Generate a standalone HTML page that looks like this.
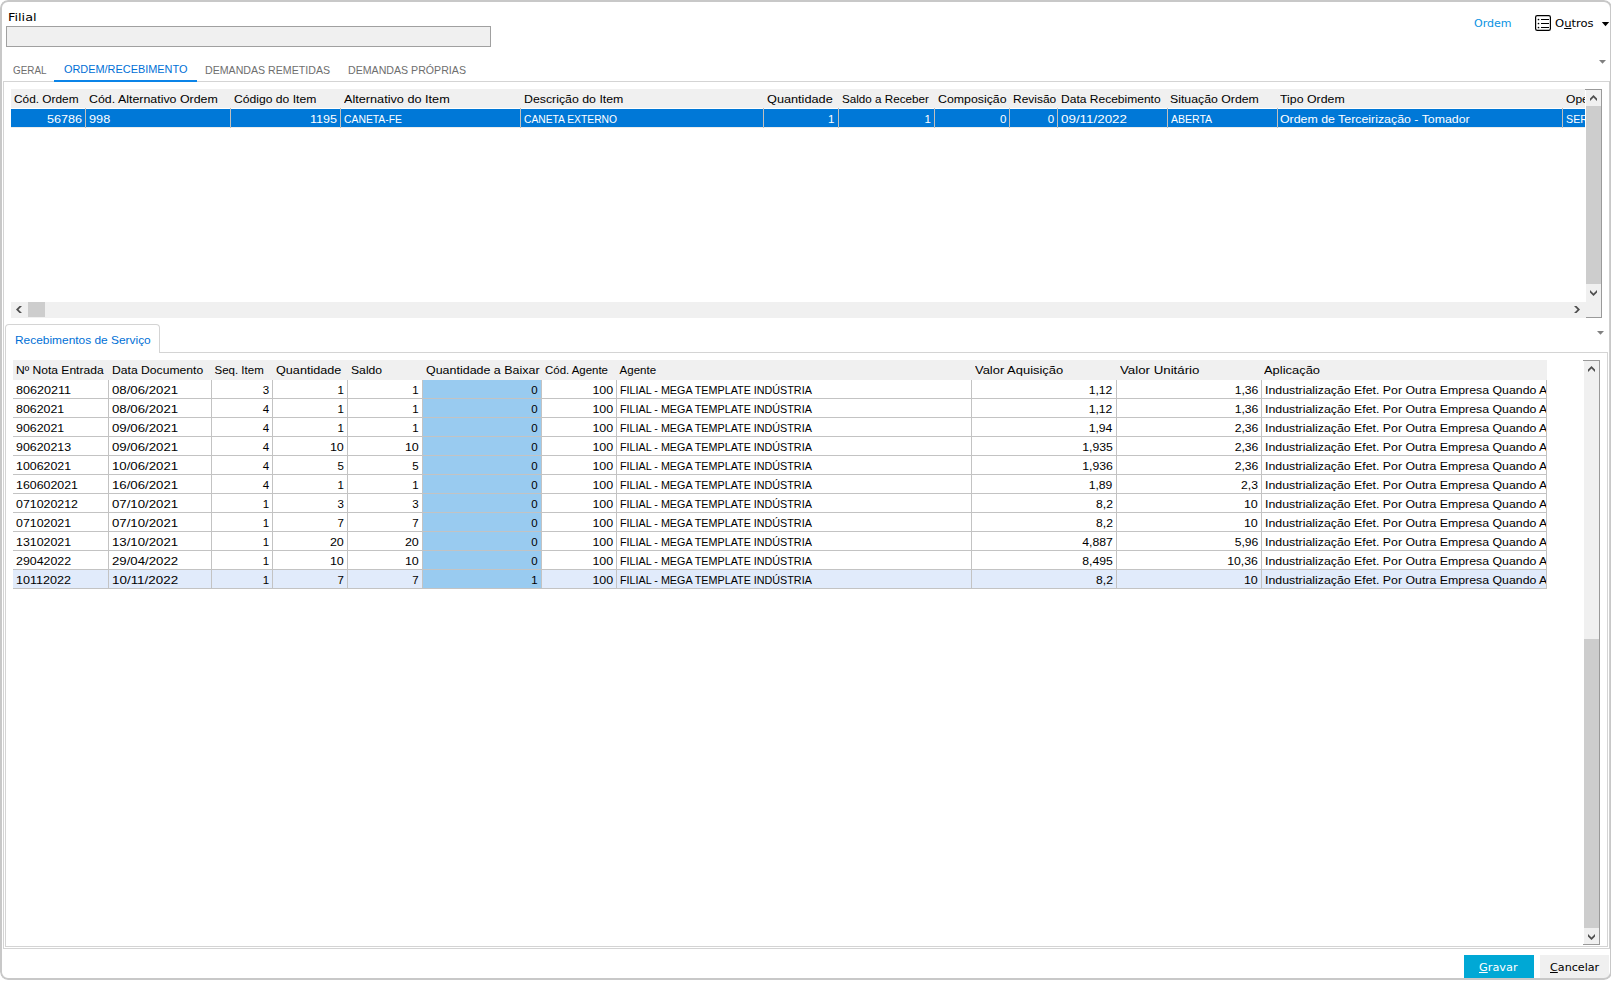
<!DOCTYPE html>
<html lang="pt-BR"><head><meta charset="utf-8"><title>Ordem/Recebimento</title>
<style>
html,body{margin:0;padding:0;background:#fff;}
body{width:1611px;height:984px;position:relative;overflow:hidden;font-family:'Liberation Sans', sans-serif;}
#win{position:absolute;left:0;top:0;width:1612px;height:980px;border-radius:8px;overflow:hidden;background:#fff;}
#frame{position:absolute;left:0;top:0;width:1612px;height:980px;box-sizing:border-box;border:2px solid #c8c8c8;border-radius:8px;pointer-events:none;}
.b{position:absolute;}
.t{position:absolute;white-space:pre;line-height:16px;height:16px;display:block;}
.t.c{overflow:hidden;}
.t.c span{display:block;width:max-content;white-space:pre;line-height:16px;}
u{text-decoration:underline;text-underline-offset:1px;}
</style></head><body>
<div id="win">
<div class="b" style="left:6px;top:26px;width:485px;height:21px;background:#f0f0f0;border:1px solid #a0a0a0;box-sizing:border-box;"></div>
<div class="b" style="left:3px;top:81px;width:1607px;height:1px;background:#d4d4d4;"></div>
<div class="b" style="left:3px;top:81px;width:1px;height:868px;background:#d4d4d4;"></div>
<div class="b" style="left:1609px;top:81px;width:1px;height:868px;background:#cfcfcf;"></div>
<div class="b" style="left:3px;top:948px;width:1607px;height:1px;background:#d4d4d4;"></div>
<div class="b" style="left:54px;top:80px;width:143px;height:2px;background:#0b84e8;"></div>
<div class="b" style="left:11px;top:89px;width:1574px;height:19px;background:#f0f0f0;"></div>
<div class="b" style="left:11px;top:127px;width:1574px;height:1px;background:#ececec;"></div>
<div class="b" style="left:11px;top:109px;width:1574px;height:18px;background:#0078d7;"></div>
<div class="b" style="left:85px;top:108px;width:1px;height:20px;background:#c2bfbc;"></div>
<div class="b" style="left:230px;top:108px;width:1px;height:20px;background:#c2bfbc;"></div>
<div class="b" style="left:340px;top:108px;width:1px;height:20px;background:#c2bfbc;"></div>
<div class="b" style="left:520px;top:108px;width:1px;height:20px;background:#c2bfbc;"></div>
<div class="b" style="left:763px;top:108px;width:1px;height:20px;background:#c2bfbc;"></div>
<div class="b" style="left:838px;top:108px;width:1px;height:20px;background:#c2bfbc;"></div>
<div class="b" style="left:934px;top:108px;width:1px;height:20px;background:#c2bfbc;"></div>
<div class="b" style="left:1009px;top:108px;width:1px;height:20px;background:#c2bfbc;"></div>
<div class="b" style="left:1057px;top:108px;width:1px;height:20px;background:#c2bfbc;"></div>
<div class="b" style="left:1167px;top:108px;width:1px;height:20px;background:#c2bfbc;"></div>
<div class="b" style="left:1277px;top:108px;width:1px;height:20px;background:#c2bfbc;"></div>
<div class="b" style="left:1562px;top:108px;width:1px;height:20px;background:#c2bfbc;"></div>
<div class="b" style="left:1586px;top:89px;width:16px;height:229px;background:#f0f0f0;"></div>
<div class="b" style="left:1585px;top:89px;width:17px;height:1px;background:#9a9a9a;"></div>
<div class="b" style="left:1601px;top:89px;width:1px;height:229px;background:#9a9a9a;"></div>
<div class="b" style="left:1585px;top:317px;width:17px;height:1px;background:#9a9a9a;"></div>
<div class="b" style="left:1586px;top:106px;width:15px;height:178px;background:#cdcdcd;"></div>
<div class="b" style="left:11px;top:302px;width:1575px;height:16px;background:#f0f0f0;"></div>
<div class="b" style="left:28px;top:302px;width:17px;height:15px;background:#cdcdcd;"></div>
<div class="b" style="left:5px;top:324px;width:155px;height:29px;background:#fff;border:1px solid #d4d4d4;border-bottom:none;border-radius:4px 4px 0 0;box-sizing:border-box;"></div>
<div class="b" style="left:159px;top:352px;width:1449px;height:1px;background:#d4d4d4;"></div>
<div class="b" style="left:5px;top:352px;width:1px;height:595px;background:#d4d4d4;"></div>
<div class="b" style="left:1607px;top:352px;width:1px;height:595px;background:#d4d4d4;"></div>
<div class="b" style="left:5px;top:946px;width:1603px;height:1px;background:#d4d4d4;"></div>
<div class="b" style="left:13px;top:360px;width:1534px;height:20px;background:#f0f0f0;"></div>
<div class="b" style="left:13px;top:570px;width:1534px;height:18px;background:#e1ebfb;"></div>
<div class="b" style="left:423px;top:380px;width:118px;height:209px;background:#99cbf0;"></div>
<div class="b" style="left:13px;top:398px;width:1534px;height:1px;background:#c3c3c3;"></div>
<div class="b" style="left:13px;top:417px;width:1534px;height:1px;background:#c3c3c3;"></div>
<div class="b" style="left:13px;top:436px;width:1534px;height:1px;background:#c3c3c3;"></div>
<div class="b" style="left:13px;top:455px;width:1534px;height:1px;background:#c3c3c3;"></div>
<div class="b" style="left:13px;top:474px;width:1534px;height:1px;background:#c3c3c3;"></div>
<div class="b" style="left:13px;top:493px;width:1534px;height:1px;background:#c3c3c3;"></div>
<div class="b" style="left:13px;top:512px;width:1534px;height:1px;background:#c3c3c3;"></div>
<div class="b" style="left:13px;top:531px;width:1534px;height:1px;background:#c3c3c3;"></div>
<div class="b" style="left:13px;top:550px;width:1534px;height:1px;background:#c3c3c3;"></div>
<div class="b" style="left:13px;top:569px;width:1534px;height:1px;background:#c3c3c3;"></div>
<div class="b" style="left:13px;top:588px;width:1534px;height:1px;background:#c3c3c3;"></div>
<div class="b" style="left:108px;top:380px;width:1px;height:209px;background:#c3c3c3;"></div>
<div class="b" style="left:211px;top:380px;width:1px;height:209px;background:#c3c3c3;"></div>
<div class="b" style="left:272px;top:380px;width:1px;height:209px;background:#c3c3c3;"></div>
<div class="b" style="left:347px;top:380px;width:1px;height:209px;background:#c3c3c3;"></div>
<div class="b" style="left:422px;top:380px;width:1px;height:209px;background:#c3c3c3;"></div>
<div class="b" style="left:541px;top:380px;width:1px;height:209px;background:#c3c3c3;"></div>
<div class="b" style="left:616px;top:380px;width:1px;height:209px;background:#c3c3c3;"></div>
<div class="b" style="left:971px;top:380px;width:1px;height:209px;background:#c3c3c3;"></div>
<div class="b" style="left:1116px;top:380px;width:1px;height:209px;background:#c3c3c3;"></div>
<div class="b" style="left:1261px;top:380px;width:1px;height:209px;background:#c3c3c3;"></div>
<div class="b" style="left:1546px;top:380px;width:1px;height:209px;background:#c3c3c3;"></div>
<div class="b" style="left:1584px;top:360px;width:16px;height:585px;background:#f0f0f0;"></div>
<div class="b" style="left:1583px;top:360px;width:17px;height:1px;background:#9a9a9a;"></div>
<div class="b" style="left:1599px;top:360px;width:1px;height:585px;background:#9a9a9a;"></div>
<div class="b" style="left:1583px;top:944px;width:17px;height:1px;background:#9a9a9a;"></div>
<div class="b" style="left:1584px;top:639px;width:15px;height:289px;background:#cdcdcd;"></div>
<div class="b" style="left:1464px;top:955px;width:70px;height:23px;background:#00a8d5;"></div>
<div class="b" style="left:1540px;top:955px;width:69px;height:23px;background:#f0f0f0;"></div>

<svg class="b" style="left:0;top:0" width="1611" height="984" viewBox="0 0 1611 984">
<g fill="#4f4f4f">
<polygon points="1593.5,95 1597,98.5 1597,101 1593.5,97.5 1590,101 1590,98.5"/>
<polygon points="1593.5,296 1597,292.5 1597,290 1593.5,293.5 1590,290 1590,292.5"/>
<polygon points="16,309.5 19.5,306 22,306 18.5,309.5 22,313 19.5,313"/>
<polygon points="1580,309.5 1576.5,306 1574,306 1577.5,309.5 1574,313 1576.5,313"/>
<polygon points="1591.5,366 1595,369.5 1595,372 1591.5,368.5 1588,372 1588,369.5"/>
<polygon points="1591.5,940 1595,936.5 1595,934 1591.5,937.5 1588,934 1588,936.5"/>
</g>
<path d="M1601.8 22 h7.4 l-3.7 4.2 z" fill="#000"/>
<path d="M1599 60 h7 l-3.5 3.8 z" fill="#808080"/>
<path d="M1597 331 h7 l-3.5 3.8 z" fill="#808080"/>
<g fill="none" stroke="#000" stroke-width="1.2">
<rect x="1535.6" y="15.6" width="14.8" height="14.8" rx="1.7"/>
</g>
<g fill="#000">
<rect x="1541" y="19" width="8" height="1"/><rect x="1541" y="23" width="8" height="1"/><rect x="1541" y="27" width="8" height="1"/>
<circle cx="1538.5" cy="19.5" r="0.85"/><circle cx="1538.5" cy="23.5" r="0.85"/><circle cx="1538.5" cy="27.5" r="0.85"/></g>
</svg>

<span class="t" style="top:10.19px;font-size:11px;color:#000;font-family:'DejaVu Sans', 'Liberation Sans', sans-serif;left:7.91px;transform-origin:0 0;transform:scaleX(1.1702);">Filial</span>
<span class="t" style="top:16.19px;font-size:11px;color:#0a93e2;font-family:'DejaVu Sans', 'Liberation Sans', sans-serif;left:1474.00px;transform-origin:0 0;transform:scaleX(1.0040);">Ordem</span>
<span class="t" style="top:16.19px;font-size:11px;color:#000;font-family:'DejaVu Sans', 'Liberation Sans', sans-serif;left:1554.67px;transform-origin:0 0;transform:scaleX(1.0527);">O<u>u</u>tros</span>
<span class="t" style="top:62.19px;font-size:11px;color:#6e6e6e;left:12.75px;transform-origin:0 0;transform:scaleX(0.8981);">GERAL</span>
<span class="t" style="top:61.19px;font-size:11px;color:#0070d6;left:63.90px;transform-origin:0 0;transform:scaleX(0.9912);">ORDEM/RECEBIMENTO</span>
<span class="t" style="top:62.19px;font-size:11px;color:#6e6e6e;left:205.02px;transform-origin:0 0;transform:scaleX(0.9652);">DEMANDAS REMETIDAS</span>
<span class="t" style="top:62.19px;font-size:11px;color:#6e6e6e;left:348.02px;transform-origin:0 0;transform:scaleX(0.9649);">DEMANDAS PRÓPRIAS</span>
<span class="t" style="top:332.02px;font-size:11.5px;color:#0070d6;left:14.98px;transform-origin:0 0;transform:scaleX(1.0358);">Recebimentos de Serviço</span>
<span class="t" style="top:960.19px;font-size:11px;color:#fff;font-family:'DejaVu Sans', 'Liberation Sans', sans-serif;left:1478.79px;transform-origin:0 0;transform:scaleX(1.0252);"><u>G</u>ravar</span>
<span class="t" style="top:960.19px;font-size:11px;color:#000;font-family:'DejaVu Sans', 'Liberation Sans', sans-serif;left:1549.69px;transform-origin:0 0;transform:scaleX(1.0137);"><u>C</u>ancelar</span>
<span class="t" style="top:91.02px;font-size:11.5px;color:#000;left:13.68px;transform-origin:0 0;transform:scaleX(1.0302);">Cód. Ordem</span>
<span class="t" style="top:91.02px;font-size:11.5px;color:#000;left:88.56px;transform-origin:0 0;transform:scaleX(1.0774);">Cód. Alternativo Ordem</span>
<span class="t" style="top:91.02px;font-size:11.5px;color:#000;left:233.57px;transform-origin:0 0;transform:scaleX(1.0545);">Código do Item</span>
<span class="t" style="top:91.02px;font-size:11.5px;color:#000;left:343.55px;transform-origin:0 0;transform:scaleX(1.1023);">Alternativo do Item</span>
<span class="t" style="top:91.02px;font-size:11.5px;color:#000;left:523.86px;transform-origin:0 0;transform:scaleX(1.0721);">Descrição do Item</span>
<span class="t" style="top:91.02px;font-size:11.5px;color:#000;left:766.85px;transform-origin:0 0;transform:scaleX(1.1049);">Quantidade</span>
<span class="t" style="top:91.02px;font-size:11.5px;color:#000;left:841.89px;transform-origin:0 0;transform:scaleX(1.0145);">Saldo a Receber</span>
<span class="t" style="top:91.02px;font-size:11.5px;color:#000;left:937.76px;transform-origin:0 0;transform:scaleX(1.0728);">Composição</span>
<span class="t" style="top:91.02px;font-size:11.5px;color:#000;left:1012.78px;transform-origin:0 0;transform:scaleX(1.0404);">Revisão</span>
<span class="t" style="top:91.02px;font-size:11.5px;color:#000;left:1060.88px;transform-origin:0 0;transform:scaleX(1.0462);">Data Recebimento</span>
<span class="t" style="top:91.02px;font-size:11.5px;color:#000;left:1170.37px;transform-origin:0 0;transform:scaleX(1.0693);">Situação Ordem</span>
<span class="t" style="top:91.02px;font-size:11.5px;color:#000;left:1280.46px;transform-origin:0 0;transform:scaleX(1.0726);">Tipo Ordem</span>
<div class="t c" style="top:91.02px;left:1565.77px;width:19.23px"><span style="font-size:11.5px;color:#000;transform-origin:0 0;transform:scaleX(1.0502)">Operação</span></div>
<span class="t" style="top:111.02px;font-size:11.5px;color:#fff;left:47.15px;transform-origin:0 0;transform:scaleX(1.0973);">56786</span>
<span class="t" style="top:111.02px;font-size:11.5px;color:#fff;left:89.05px;transform-origin:0 0;transform:scaleX(1.1052);">998</span>
<span class="t" style="top:111.02px;font-size:11.5px;color:#fff;left:309.85px;transform-origin:0 0;transform:scaleX(1.0955);">1195</span>
<span class="t" style="top:111.02px;font-size:11.5px;color:#fff;left:343.65px;transform-origin:0 0;transform:scaleX(0.9017);">CANETA-FE</span>
<span class="t" style="top:111.02px;font-size:11.5px;color:#fff;left:523.95px;transform-origin:0 0;transform:scaleX(0.8946);">CANETA EXTERNO</span>
<span class="t" style="top:111.02px;font-size:11.5px;color:#fff;right:777.50px;transform-origin:100% 0;">1</span>
<span class="t" style="top:111.02px;font-size:11.5px;color:#fff;right:681.20px;transform-origin:100% 0;">1</span>
<span class="t" style="top:111.02px;font-size:11.5px;color:#fff;right:605.70px;transform-origin:100% 0;">0</span>
<span class="t" style="top:111.02px;font-size:11.5px;color:#fff;right:557.80px;transform-origin:100% 0;">0</span>
<span class="t" style="top:111.02px;font-size:11.5px;color:#fff;left:1060.82px;transform-origin:0 0;transform:scaleX(1.1633);">09/11/2022</span>
<span class="t" style="top:111.02px;font-size:11.5px;color:#fff;left:1170.54px;transform-origin:0 0;transform:scaleX(0.9146);">ABERTA</span>
<span class="t" style="top:111.02px;font-size:11.5px;color:#fff;left:1280.46px;transform-origin:0 0;transform:scaleX(1.0739);">Ordem de Terceirização - Tomador</span>
<div class="t c" style="top:111.02px;left:1565.84px;width:19.16px"><span style="font-size:11.5px;color:#fff;transform-origin:0 0;transform:scaleX(0.9295)">SERVIÇO</span></div>
<span class="t" style="top:361.52px;font-size:11.5px;color:#000;left:15.87px;transform-origin:0 0;transform:scaleX(1.0501);">Nº Nota Entrada</span>
<span class="t" style="top:361.52px;font-size:11.5px;color:#000;left:111.97px;transform-origin:0 0;transform:scaleX(1.0563);">Data Documento</span>
<span class="t" style="top:361.52px;font-size:11.5px;color:#000;left:214.50px;transform-origin:0 0;">Seq. Item</span>
<span class="t" style="top:361.52px;font-size:11.5px;color:#000;left:275.85px;transform-origin:0 0;transform:scaleX(1.0997);">Quantidade</span>
<span class="t" style="top:361.52px;font-size:11.5px;color:#000;left:350.77px;transform-origin:0 0;transform:scaleX(1.0590);">Saldo</span>
<span class="t" style="top:361.52px;font-size:11.5px;color:#000;left:425.96px;transform-origin:0 0;transform:scaleX(1.0832);">Quantidade a Baixar</span>
<span class="t" style="top:361.52px;font-size:11.5px;color:#000;left:544.70px;transform-origin:0 0;transform:scaleX(0.9950);">Cód. Agente</span>
<span class="t" style="top:361.52px;font-size:11.5px;color:#000;left:619.60px;transform-origin:0 0;">Agente</span>
<span class="t" style="top:361.52px;font-size:11.5px;color:#000;left:974.74px;transform-origin:0 0;transform:scaleX(1.1250);">Valor Aquisição</span>
<span class="t" style="top:361.52px;font-size:11.5px;color:#000;left:1119.62px;transform-origin:0 0;transform:scaleX(1.1544);">Valor Unitário</span>
<span class="t" style="top:361.52px;font-size:11.5px;color:#000;left:1264.44px;transform-origin:0 0;transform:scaleX(1.1233);">Aplicação</span>
<span class="t" style="top:381.62px;font-size:11.5px;color:#000;left:16.05px;transform-origin:0 0;transform:scaleX(1.0947);">80620211</span>
<span class="t" style="top:381.62px;font-size:11.5px;color:#000;left:111.93px;transform-origin:0 0;transform:scaleX(1.1492);">08/06/2021</span>
<span class="t" style="top:381.62px;font-size:11.5px;color:#000;right:1342.80px;transform-origin:100% 0;">3</span>
<span class="t" style="top:381.62px;font-size:11.5px;color:#000;right:1268.10px;transform-origin:100% 0;">1</span>
<span class="t" style="top:381.62px;font-size:11.5px;color:#000;right:1193.40px;transform-origin:100% 0;">1</span>
<span class="t" style="top:381.62px;font-size:11.5px;color:#000;right:1074.30px;transform-origin:100% 0;">0</span>
<span class="t" style="top:381.62px;font-size:11.5px;color:#000;right:998.76px;transform-origin:100% 0;transform:scaleX(1.0821);">100</span>
<span class="t" style="top:381.62px;font-size:11.5px;color:#000;right:499.17px;transform-origin:100% 0;transform:scaleX(1.0603);">1,12</span>
<span class="t" style="top:381.62px;font-size:11.5px;color:#000;right:353.87px;transform-origin:100% 0;transform:scaleX(1.0603);">1,36</span>
<span class="t" style="top:381.62px;font-size:11.5px;color:#000;left:619.83px;transform-origin:0 0;transform:scaleX(0.9361);">FILIAL - MEGA TEMPLATE INDÚSTRIA</span>
<div class="t c" style="top:381.62px;left:1264.76px;width:281.24px"><span style="font-size:11.5px;color:#000;transform-origin:0 0;transform:scaleX(1.0721)">Industrialização Efet. Por Outra Empresa Quando A</span></div>
<span class="t" style="top:400.62px;font-size:11.5px;color:#000;left:16.06px;transform-origin:0 0;transform:scaleX(1.0763);">8062021</span>
<span class="t" style="top:400.62px;font-size:11.5px;color:#000;left:111.93px;transform-origin:0 0;transform:scaleX(1.1492);">08/06/2021</span>
<span class="t" style="top:400.62px;font-size:11.5px;color:#000;right:1342.80px;transform-origin:100% 0;">4</span>
<span class="t" style="top:400.62px;font-size:11.5px;color:#000;right:1268.10px;transform-origin:100% 0;">1</span>
<span class="t" style="top:400.62px;font-size:11.5px;color:#000;right:1193.40px;transform-origin:100% 0;">1</span>
<span class="t" style="top:400.62px;font-size:11.5px;color:#000;right:1074.30px;transform-origin:100% 0;">0</span>
<span class="t" style="top:400.62px;font-size:11.5px;color:#000;right:998.76px;transform-origin:100% 0;transform:scaleX(1.0821);">100</span>
<span class="t" style="top:400.62px;font-size:11.5px;color:#000;right:499.17px;transform-origin:100% 0;transform:scaleX(1.0603);">1,12</span>
<span class="t" style="top:400.62px;font-size:11.5px;color:#000;right:353.87px;transform-origin:100% 0;transform:scaleX(1.0603);">1,36</span>
<span class="t" style="top:400.62px;font-size:11.5px;color:#000;left:619.83px;transform-origin:0 0;transform:scaleX(0.9361);">FILIAL - MEGA TEMPLATE INDÚSTRIA</span>
<div class="t c" style="top:400.62px;left:1264.76px;width:281.24px"><span style="font-size:11.5px;color:#000;transform-origin:0 0;transform:scaleX(1.0721)">Industrialização Efet. Por Outra Empresa Quando A</span></div>
<span class="t" style="top:419.62px;font-size:11.5px;color:#000;left:16.06px;transform-origin:0 0;transform:scaleX(1.0763);">9062021</span>
<span class="t" style="top:419.62px;font-size:11.5px;color:#000;left:111.93px;transform-origin:0 0;transform:scaleX(1.1492);">09/06/2021</span>
<span class="t" style="top:419.62px;font-size:11.5px;color:#000;right:1342.80px;transform-origin:100% 0;">4</span>
<span class="t" style="top:419.62px;font-size:11.5px;color:#000;right:1268.10px;transform-origin:100% 0;">1</span>
<span class="t" style="top:419.62px;font-size:11.5px;color:#000;right:1193.40px;transform-origin:100% 0;">1</span>
<span class="t" style="top:419.62px;font-size:11.5px;color:#000;right:1074.30px;transform-origin:100% 0;">0</span>
<span class="t" style="top:419.62px;font-size:11.5px;color:#000;right:998.76px;transform-origin:100% 0;transform:scaleX(1.0821);">100</span>
<span class="t" style="top:419.62px;font-size:11.5px;color:#000;right:499.17px;transform-origin:100% 0;transform:scaleX(1.0603);">1,94</span>
<span class="t" style="top:419.62px;font-size:11.5px;color:#000;right:353.87px;transform-origin:100% 0;transform:scaleX(1.0603);">2,36</span>
<span class="t" style="top:419.62px;font-size:11.5px;color:#000;left:619.83px;transform-origin:0 0;transform:scaleX(0.9361);">FILIAL - MEGA TEMPLATE INDÚSTRIA</span>
<div class="t c" style="top:419.62px;left:1264.76px;width:281.24px"><span style="font-size:11.5px;color:#000;transform-origin:0 0;transform:scaleX(1.0721)">Industrialização Efet. Por Outra Empresa Quando A</span></div>
<span class="t" style="top:438.62px;font-size:11.5px;color:#000;left:16.06px;transform-origin:0 0;transform:scaleX(1.0759);">90620213</span>
<span class="t" style="top:438.62px;font-size:11.5px;color:#000;left:111.93px;transform-origin:0 0;transform:scaleX(1.1492);">09/06/2021</span>
<span class="t" style="top:438.62px;font-size:11.5px;color:#000;right:1342.80px;transform-origin:100% 0;">4</span>
<span class="t" style="top:438.62px;font-size:11.5px;color:#000;right:1268.06px;transform-origin:100% 0;transform:scaleX(1.0867);">10</span>
<span class="t" style="top:438.62px;font-size:11.5px;color:#000;right:1193.36px;transform-origin:100% 0;transform:scaleX(1.0867);">10</span>
<span class="t" style="top:438.62px;font-size:11.5px;color:#000;right:1074.30px;transform-origin:100% 0;">0</span>
<span class="t" style="top:438.62px;font-size:11.5px;color:#000;right:998.76px;transform-origin:100% 0;transform:scaleX(1.0821);">100</span>
<span class="t" style="top:438.62px;font-size:11.5px;color:#000;right:499.17px;transform-origin:100% 0;transform:scaleX(1.0633);">1,935</span>
<span class="t" style="top:438.62px;font-size:11.5px;color:#000;right:353.87px;transform-origin:100% 0;transform:scaleX(1.0603);">2,36</span>
<span class="t" style="top:438.62px;font-size:11.5px;color:#000;left:619.83px;transform-origin:0 0;transform:scaleX(0.9361);">FILIAL - MEGA TEMPLATE INDÚSTRIA</span>
<div class="t c" style="top:438.62px;left:1264.76px;width:281.24px"><span style="font-size:11.5px;color:#000;transform-origin:0 0;transform:scaleX(1.0721)">Industrialização Efet. Por Outra Empresa Quando A</span></div>
<span class="t" style="top:457.62px;font-size:11.5px;color:#000;left:16.06px;transform-origin:0 0;transform:scaleX(1.0759);">10062021</span>
<span class="t" style="top:457.62px;font-size:11.5px;color:#000;left:111.93px;transform-origin:0 0;transform:scaleX(1.1492);">10/06/2021</span>
<span class="t" style="top:457.62px;font-size:11.5px;color:#000;right:1342.80px;transform-origin:100% 0;">4</span>
<span class="t" style="top:457.62px;font-size:11.5px;color:#000;right:1268.10px;transform-origin:100% 0;">5</span>
<span class="t" style="top:457.62px;font-size:11.5px;color:#000;right:1193.40px;transform-origin:100% 0;">5</span>
<span class="t" style="top:457.62px;font-size:11.5px;color:#000;right:1074.30px;transform-origin:100% 0;">0</span>
<span class="t" style="top:457.62px;font-size:11.5px;color:#000;right:998.76px;transform-origin:100% 0;transform:scaleX(1.0821);">100</span>
<span class="t" style="top:457.62px;font-size:11.5px;color:#000;right:499.17px;transform-origin:100% 0;transform:scaleX(1.0633);">1,936</span>
<span class="t" style="top:457.62px;font-size:11.5px;color:#000;right:353.87px;transform-origin:100% 0;transform:scaleX(1.0603);">2,36</span>
<span class="t" style="top:457.62px;font-size:11.5px;color:#000;left:619.83px;transform-origin:0 0;transform:scaleX(0.9361);">FILIAL - MEGA TEMPLATE INDÚSTRIA</span>
<div class="t c" style="top:457.62px;left:1264.76px;width:281.24px"><span style="font-size:11.5px;color:#000;transform-origin:0 0;transform:scaleX(1.0721)">Industrialização Efet. Por Outra Empresa Quando A</span></div>
<span class="t" style="top:476.62px;font-size:11.5px;color:#000;left:16.06px;transform-origin:0 0;transform:scaleX(1.0756);">160602021</span>
<span class="t" style="top:476.62px;font-size:11.5px;color:#000;left:111.93px;transform-origin:0 0;transform:scaleX(1.1492);">16/06/2021</span>
<span class="t" style="top:476.62px;font-size:11.5px;color:#000;right:1342.80px;transform-origin:100% 0;">4</span>
<span class="t" style="top:476.62px;font-size:11.5px;color:#000;right:1268.10px;transform-origin:100% 0;">1</span>
<span class="t" style="top:476.62px;font-size:11.5px;color:#000;right:1193.40px;transform-origin:100% 0;">1</span>
<span class="t" style="top:476.62px;font-size:11.5px;color:#000;right:1074.30px;transform-origin:100% 0;">0</span>
<span class="t" style="top:476.62px;font-size:11.5px;color:#000;right:998.76px;transform-origin:100% 0;transform:scaleX(1.0821);">100</span>
<span class="t" style="top:476.62px;font-size:11.5px;color:#000;right:499.17px;transform-origin:100% 0;transform:scaleX(1.0603);">1,89</span>
<span class="t" style="top:476.62px;font-size:11.5px;color:#000;right:353.87px;transform-origin:100% 0;transform:scaleX(1.0547);">2,3</span>
<span class="t" style="top:476.62px;font-size:11.5px;color:#000;left:619.83px;transform-origin:0 0;transform:scaleX(0.9361);">FILIAL - MEGA TEMPLATE INDÚSTRIA</span>
<div class="t c" style="top:476.62px;left:1264.76px;width:281.24px"><span style="font-size:11.5px;color:#000;transform-origin:0 0;transform:scaleX(1.0721)">Industrialização Efet. Por Outra Empresa Quando A</span></div>
<span class="t" style="top:495.62px;font-size:11.5px;color:#000;left:16.06px;transform-origin:0 0;transform:scaleX(1.0756);">071020212</span>
<span class="t" style="top:495.62px;font-size:11.5px;color:#000;left:111.93px;transform-origin:0 0;transform:scaleX(1.1492);">07/10/2021</span>
<span class="t" style="top:495.62px;font-size:11.5px;color:#000;right:1342.80px;transform-origin:100% 0;">1</span>
<span class="t" style="top:495.62px;font-size:11.5px;color:#000;right:1268.10px;transform-origin:100% 0;">3</span>
<span class="t" style="top:495.62px;font-size:11.5px;color:#000;right:1193.40px;transform-origin:100% 0;">3</span>
<span class="t" style="top:495.62px;font-size:11.5px;color:#000;right:1074.30px;transform-origin:100% 0;">0</span>
<span class="t" style="top:495.62px;font-size:11.5px;color:#000;right:998.76px;transform-origin:100% 0;transform:scaleX(1.0821);">100</span>
<span class="t" style="top:495.62px;font-size:11.5px;color:#000;right:499.17px;transform-origin:100% 0;transform:scaleX(1.0547);">8,2</span>
<span class="t" style="top:495.62px;font-size:11.5px;color:#000;right:353.86px;transform-origin:100% 0;transform:scaleX(1.0867);">10</span>
<span class="t" style="top:495.62px;font-size:11.5px;color:#000;left:619.83px;transform-origin:0 0;transform:scaleX(0.9361);">FILIAL - MEGA TEMPLATE INDÚSTRIA</span>
<div class="t c" style="top:495.62px;left:1264.76px;width:281.24px"><span style="font-size:11.5px;color:#000;transform-origin:0 0;transform:scaleX(1.0721)">Industrialização Efet. Por Outra Empresa Quando A</span></div>
<span class="t" style="top:514.62px;font-size:11.5px;color:#000;left:16.06px;transform-origin:0 0;transform:scaleX(1.0759);">07102021</span>
<span class="t" style="top:514.62px;font-size:11.5px;color:#000;left:111.93px;transform-origin:0 0;transform:scaleX(1.1492);">07/10/2021</span>
<span class="t" style="top:514.62px;font-size:11.5px;color:#000;right:1342.80px;transform-origin:100% 0;">1</span>
<span class="t" style="top:514.62px;font-size:11.5px;color:#000;right:1268.10px;transform-origin:100% 0;">7</span>
<span class="t" style="top:514.62px;font-size:11.5px;color:#000;right:1193.40px;transform-origin:100% 0;">7</span>
<span class="t" style="top:514.62px;font-size:11.5px;color:#000;right:1074.30px;transform-origin:100% 0;">0</span>
<span class="t" style="top:514.62px;font-size:11.5px;color:#000;right:998.76px;transform-origin:100% 0;transform:scaleX(1.0821);">100</span>
<span class="t" style="top:514.62px;font-size:11.5px;color:#000;right:499.17px;transform-origin:100% 0;transform:scaleX(1.0547);">8,2</span>
<span class="t" style="top:514.62px;font-size:11.5px;color:#000;right:353.86px;transform-origin:100% 0;transform:scaleX(1.0867);">10</span>
<span class="t" style="top:514.62px;font-size:11.5px;color:#000;left:619.83px;transform-origin:0 0;transform:scaleX(0.9361);">FILIAL - MEGA TEMPLATE INDÚSTRIA</span>
<div class="t c" style="top:514.62px;left:1264.76px;width:281.24px"><span style="font-size:11.5px;color:#000;transform-origin:0 0;transform:scaleX(1.0721)">Industrialização Efet. Por Outra Empresa Quando A</span></div>
<span class="t" style="top:533.62px;font-size:11.5px;color:#000;left:16.06px;transform-origin:0 0;transform:scaleX(1.0759);">13102021</span>
<span class="t" style="top:533.62px;font-size:11.5px;color:#000;left:111.93px;transform-origin:0 0;transform:scaleX(1.1492);">13/10/2021</span>
<span class="t" style="top:533.62px;font-size:11.5px;color:#000;right:1342.80px;transform-origin:100% 0;">1</span>
<span class="t" style="top:533.62px;font-size:11.5px;color:#000;right:1268.06px;transform-origin:100% 0;transform:scaleX(1.0867);">20</span>
<span class="t" style="top:533.62px;font-size:11.5px;color:#000;right:1193.36px;transform-origin:100% 0;transform:scaleX(1.0867);">20</span>
<span class="t" style="top:533.62px;font-size:11.5px;color:#000;right:1074.30px;transform-origin:100% 0;">0</span>
<span class="t" style="top:533.62px;font-size:11.5px;color:#000;right:998.76px;transform-origin:100% 0;transform:scaleX(1.0821);">100</span>
<span class="t" style="top:533.62px;font-size:11.5px;color:#000;right:499.17px;transform-origin:100% 0;transform:scaleX(1.0633);">4,887</span>
<span class="t" style="top:533.62px;font-size:11.5px;color:#000;right:353.87px;transform-origin:100% 0;transform:scaleX(1.0603);">5,96</span>
<span class="t" style="top:533.62px;font-size:11.5px;color:#000;left:619.83px;transform-origin:0 0;transform:scaleX(0.9361);">FILIAL - MEGA TEMPLATE INDÚSTRIA</span>
<div class="t c" style="top:533.62px;left:1264.76px;width:281.24px"><span style="font-size:11.5px;color:#000;transform-origin:0 0;transform:scaleX(1.0721)">Industrialização Efet. Por Outra Empresa Quando A</span></div>
<span class="t" style="top:552.62px;font-size:11.5px;color:#000;left:16.06px;transform-origin:0 0;transform:scaleX(1.0759);">29042022</span>
<span class="t" style="top:552.62px;font-size:11.5px;color:#000;left:111.93px;transform-origin:0 0;transform:scaleX(1.1492);">29/04/2022</span>
<span class="t" style="top:552.62px;font-size:11.5px;color:#000;right:1342.80px;transform-origin:100% 0;">1</span>
<span class="t" style="top:552.62px;font-size:11.5px;color:#000;right:1268.06px;transform-origin:100% 0;transform:scaleX(1.0867);">10</span>
<span class="t" style="top:552.62px;font-size:11.5px;color:#000;right:1193.36px;transform-origin:100% 0;transform:scaleX(1.0867);">10</span>
<span class="t" style="top:552.62px;font-size:11.5px;color:#000;right:1074.30px;transform-origin:100% 0;">0</span>
<span class="t" style="top:552.62px;font-size:11.5px;color:#000;right:998.76px;transform-origin:100% 0;transform:scaleX(1.0821);">100</span>
<span class="t" style="top:552.62px;font-size:11.5px;color:#000;right:499.17px;transform-origin:100% 0;transform:scaleX(1.0633);">8,495</span>
<span class="t" style="top:552.62px;font-size:11.5px;color:#000;right:353.87px;transform-origin:100% 0;transform:scaleX(1.0633);">10,36</span>
<span class="t" style="top:552.62px;font-size:11.5px;color:#000;left:619.83px;transform-origin:0 0;transform:scaleX(0.9361);">FILIAL - MEGA TEMPLATE INDÚSTRIA</span>
<div class="t c" style="top:552.62px;left:1264.76px;width:281.24px"><span style="font-size:11.5px;color:#000;transform-origin:0 0;transform:scaleX(1.0721)">Industrialização Efet. Por Outra Empresa Quando A</span></div>
<span class="t" style="top:571.62px;font-size:11.5px;color:#000;left:16.05px;transform-origin:0 0;transform:scaleX(1.0947);">10112022</span>
<span class="t" style="top:571.62px;font-size:11.5px;color:#000;left:111.92px;transform-origin:0 0;transform:scaleX(1.1669);">10/11/2022</span>
<span class="t" style="top:571.62px;font-size:11.5px;color:#000;right:1342.80px;transform-origin:100% 0;">1</span>
<span class="t" style="top:571.62px;font-size:11.5px;color:#000;right:1268.10px;transform-origin:100% 0;">7</span>
<span class="t" style="top:571.62px;font-size:11.5px;color:#000;right:1193.40px;transform-origin:100% 0;">7</span>
<span class="t" style="top:571.62px;font-size:11.5px;color:#000;right:1074.30px;transform-origin:100% 0;">1</span>
<span class="t" style="top:571.62px;font-size:11.5px;color:#000;right:998.76px;transform-origin:100% 0;transform:scaleX(1.0821);">100</span>
<span class="t" style="top:571.62px;font-size:11.5px;color:#000;right:499.17px;transform-origin:100% 0;transform:scaleX(1.0547);">8,2</span>
<span class="t" style="top:571.62px;font-size:11.5px;color:#000;right:353.86px;transform-origin:100% 0;transform:scaleX(1.0867);">10</span>
<span class="t" style="top:571.62px;font-size:11.5px;color:#000;left:619.83px;transform-origin:0 0;transform:scaleX(0.9361);">FILIAL - MEGA TEMPLATE INDÚSTRIA</span>
<div class="t c" style="top:571.62px;left:1264.76px;width:281.24px"><span style="font-size:11.5px;color:#000;transform-origin:0 0;transform:scaleX(1.0721)">Industrialização Efet. Por Outra Empresa Quando A</span></div>
<div id="frame"></div>
</div>
</body></html>
